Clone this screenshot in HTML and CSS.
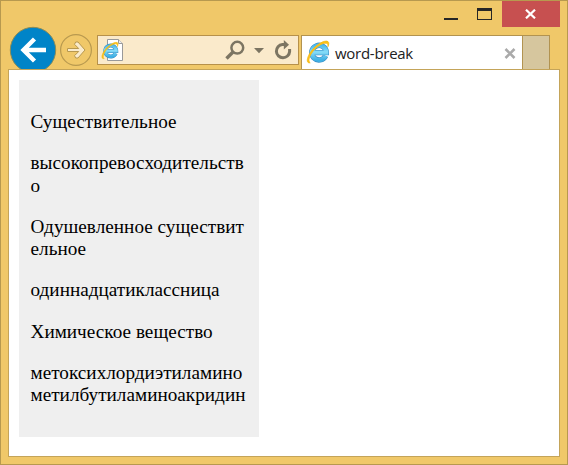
FILE: index.html
```html
<!DOCTYPE html>
<html lang="ru">
<head>
<meta charset="utf-8">
<title>word-break</title>
<link rel="stylesheet" href="styles.css">
</head>
<body>
<svg class="defs" width="0" height="0">
  <defs>
    <linearGradient id="blue" x1="0" y1="0" x2="0" y2="1"><stop offset="0" stop-color="#4db9ea"/><stop offset=".45" stop-color="#86dcf8"/><stop offset="1" stop-color="#3fb0e4"/></linearGradient>
    <symbol id="ie" viewBox="0 0 24 24">
      <path d="M19.600 15.800a7.300 7.300 0 1 1 .7-3.200H7.200" fill="none" stroke="#3a8cc4" stroke-width="5.400"/>
      <path d="M19.600 15.800a7.300 7.300 0 1 1 .7-3.200H7.200" fill="none" stroke="url(#blue)" stroke-width="4.200"/>
      <path d="M4.200 22.800C.2 23.700.3 18.400 4.500 12.200 9.600 4.800 18.900-.6 22 1.600c1.200.9.9 3.100-.1 5.100.3-2.100-.2-3.300-1.700-3.500C16 2.600 9.200 7.700 5.600 13.200c-3 4.600-3.400 8.300-1.400 9.600z" fill="#fcc319" stroke="#f5b816" stroke-width=".8"/>
    </symbol>
  </defs>
</svg>
<div class="window">
  <header class="titlebar">
    <span class="minimize"></span>
    <span class="maximize"></span>
    <span class="close"><svg width="11" height="10" viewBox="0 0 11 10"><path d="M1 .7l9 8.600M10 .7L1 9.300" stroke="#fff" stroke-width="2.200"/></svg></span>
  </header>
  <nav class="toolbar">
    <svg class="back" width="48" height="48" viewBox="0 0 48 48"><circle cx="24" cy="24" r="22.700" fill="#0084c8" stroke="#8b8c58" stroke-width="1"/><path d="M37 24H14.500M25.500 13L14.500 24l11 11" fill="none" stroke="#fff" stroke-width="4.400"/></svg>
    <svg class="forward" width="34" height="34" viewBox="0 0 34 34"><circle cx="17" cy="17" r="15.400" fill="none" stroke="#b8994f" stroke-width="1.200"/><path d="M8.500 15.500h11.200l-4.200-4.200 1.200-2.300h2.300l7 8-7 8h-2.300l-1.200-2.300 4.200-4.200H8.500z" fill="#faebcb" stroke="#b8994f"/></svg>
    <div class="address">
      <svg class="page" width="24" height="24" viewBox="0 0 24 24"><path d="M6.500 1.500h11l4 4v17h-15z" fill="#fff" stroke="#999" /><path d="M17.500 1.500v4h4" fill="#eee" stroke="#999"/><use href="#ie" x="0" y="3.500" width="18" height="18"/></svg>
      <svg class="search" width="20" height="20" viewBox="0 0 20 20" fill="none" stroke="#7c7562"><circle cx="12.300" cy="7.700" r="5.900" stroke-width="2.500"/><path d="M8 12l-6.500 6.500" stroke-width="3.300"/></svg>
      <svg class="drop" width="10" height="6" viewBox="0 0 10 6"><path d="M0 0h10L5 5.200z" fill="#7c7562"/></svg>
      <svg class="reload" width="18" height="20" viewBox="0 0 18 20"><path d="M10.500 4.600H8.400a6.600 6.600 0 1 0 7.200 7V9" fill="none" stroke="#7c7562" stroke-width="3"/><path d="M9.800 0l5.200 4.700-5.200 4.700z" fill="#7c7562"/></svg>
    </div>
    <div class="tab">
      <svg class="tab-icon" width="24" height="24"><use href="#ie" width="24" height="24"/></svg>
      <span class="tab-title">word-break</span>
      <svg class="tab-close" width="12" height="11" viewBox="0 0 12 11"><path d="M1.500 1l9 9M10.500 1l-9 9" stroke="#aaa" stroke-width="2.600"/></svg>
    </div>
    <div class="new-tab"></div>
  </nav>
  <main class="viewport">
    <div class="box">
      <p>Существительное</p>
      <p>высокопревосходительство</p>
      <p>Одушевленное существительное</p>
      <p>одиннадцатиклассница</p>
      <p>Химическое вещество</p>
      <p>метоксихлордиэтиламинометилбутиламиноакридин</p>
    </div>
  </main>
</div>
</body>
</html>
```
FILE: styles.css
```css
* { box-sizing: border-box; }
body { margin: 0; }
svg { display: block; flex: none; }
.defs { position: absolute; }
.window {
  width: 568px;
  height: 465px;
  border: 1px solid #b7994f;
  background: #f0c869;
  padding: 0 7px 7px;
  display: flex;
  flex-direction: column;
}
.titlebar {
  height: 34px;
  flex: none;
  display: flex;
  justify-content: flex-end;
  align-items: flex-start;
}
.minimize { width: 14px; height: 2px; background: #262626; margin: 17px 19px 0 0; }
.maximize { width: 15px; height: 12px; border: 1px solid #262626; border-top-width: 3px; margin: 7px 10px 0 0; }
.close {
  width: 58px;
  height: 26px;
  padding-right: 2px;
  background: #c75050;
  display: flex;
  align-items: center;
  justify-content: center;
}
.toolbar { height: 34px; flex: none; display: flex; align-items: flex-start; }
.back { margin: -9px 0 0 1px; }
.forward { margin: -2px 0 0 2px; }
.address {
  width: 202px;
  height: 30px;
  margin-left: 4px;
  border: 1px solid #b7914a;
  background: #faeacb;
  display: flex;
  align-items: center;
}
.page { margin: 0 0 1px 3px; }
.search { margin-left: 100px; }
.drop { margin: 2px 0 0 9px; }
.reload { margin: 0 0 1px 10px; }
.tab {
  width: 222px;
  height: 34px;
  margin-left: 2px;
  border: 1px solid #b29350;
  border-bottom: 0;
  background: #fff;
  display: flex;
  align-items: center;
  padding: 2px 6px 0 5px;
}
.tab-icon { margin: -3px 1px 0 -1px; }
.tab-title { margin: -1px auto 0 4px; font: 15px/20px "Open Sans", "Noto Sans", sans-serif; letter-spacing: -.28px; color: #222; }
.new-tab { width: 27px; height: 34px; background: #d6c69e; border: 1px solid #b29350; border-width: 1px 1px 0 0; }
.viewport {
  position: relative;
  flex: 1;
  border: 1px solid #c4a459;
  background: #fff;
  padding: 10px;
}
.box {
  width: 240px;
  height: 357px;
  padding: 12px 12px 12px 11.500px;
  background: #efefef;
  color: #000;
  font: 19.2px/22.100px "Liberation Serif", "Times New Roman", serif;
  letter-spacing: .02px;
  word-break: break-all;
  display: flow-root;
}
.box p { margin: 19.2px 0; }
```
